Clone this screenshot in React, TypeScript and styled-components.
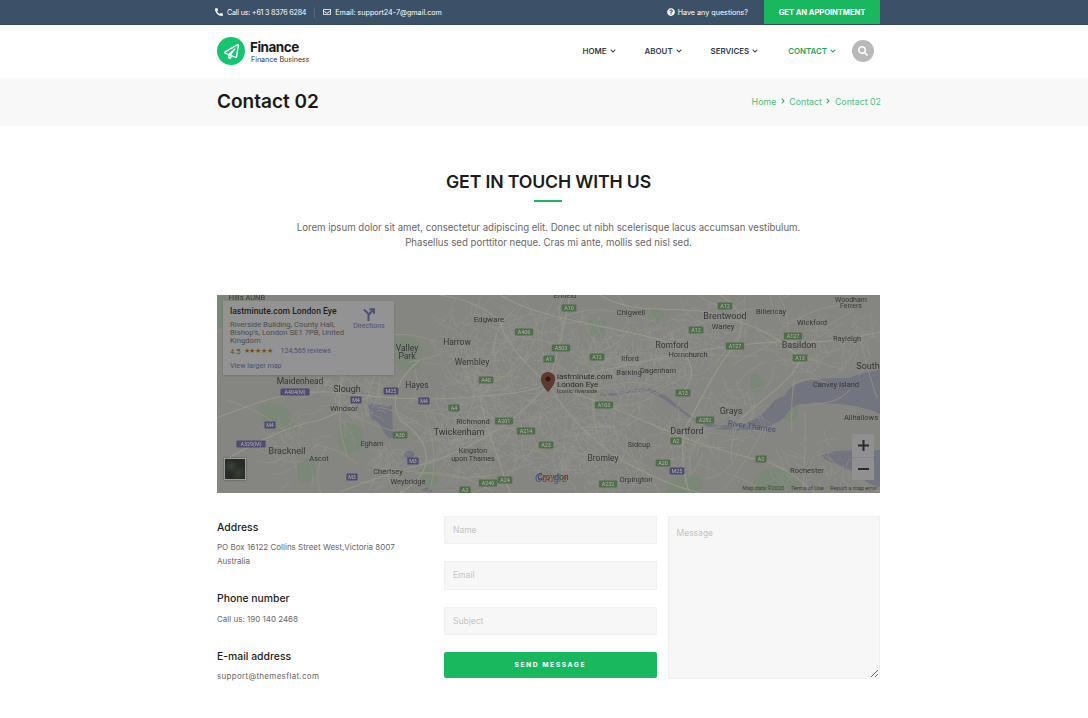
import React, { useMemo } from "react";
import styled, { createGlobalStyle } from "styled-components";
import { FaPhoneAlt, FaRegEnvelope, FaQuestionCircle, FaSearch, FaRegPaperPlane, FaChevronDown, FaChevronRight } from "react-icons/fa";

const Global = createGlobalStyle`
  html, body { margin: 0; padding: 0; background: #fff; overflow: hidden; }
  body { font-family: Inter, "Liberation Sans", sans-serif; color: #666; }
  * { box-sizing: border-box; }
`;
const Container = styled.div`
  width: 663px;
  margin-left: 217px;
  display: flex;
  align-items: center;
  justify-content: space-between;
`;
const TopBar = styled.div`
  height: 25px;
  background: #3c5068;
  border-bottom: 1px solid #33465c;
  color: #fff;
  font-size: 7.2px;
`;
const TopRow = styled(Container)`
  height: 24px;
`;
const TopGroup = styled.div`
  display: flex;
  align-items: center;
  height: 100%;
`;
const TopItem = styled.span<{ $gap?: number; $tight?: boolean; $shift?: number }>`
  display: inline-flex;
  align-items: center;
  gap: ${(p) => p.$gap ?? 4}px;
  margin-left: ${(p) => p.$shift ?? 0}px;
  letter-spacing: ${(p) => (p.$tight ? "-0.23px" : "0")};
  svg { font-size: 8px; }
`;
const TopDivider = styled.span`
  width: 1px;
  height: 11px;
  background: #52657c;
  margin: 0 8px;
`;
const Appointment = styled.a`
  display: flex;
  align-items: center;
  justify-content: center;
  width: 116px;
  height: 24px;
  margin-left: 16px;
  background: #19b85f;
  color: #fff;
  font-size: 7.7px;
  font-weight: 700;
  letter-spacing: -0.1px;
`;
const Header = styled(Container)`
  height: 53px;
  padding-bottom: 1px;
`;
const Logo = styled.div`
  display: flex;
  align-items: center;
  gap: 5px;
`;
const LogoMark = styled.div`
  width: 28px;
  height: 28px;
  border-radius: 50%;
  background: #17c46f;
  color: #fff;
  display: flex;
  align-items: center;
  justify-content: center;
  font-size: 15px;
`;
const LogoText = styled.div`
  display: flex;
  flex-direction: column;
  padding-top: 2px;
`;
const LogoName = styled.div`
  font-size: 13.5px;
  line-height: 14px;
  font-weight: 700;
  color: #1a1a1a;
  letter-spacing: -0.5px;
`;
const LogoSub = styled.div`
  font-size: 7.1px;
  line-height: 9px;
  color: #333;
  margin: 1px 0 0 1px;
`;
const Nav = styled.nav`
  display: flex;
  align-items: center;
`;
const NavItem = styled.a<{ $active?: boolean; $gap: number }>`
  display: inline-flex;
  align-items: center;
  gap: 3px;
  margin-right: ${(p) => p.$gap}px;
  font-size: 7.9px;
  font-weight: 600;
  color: ${(p) => (p.$active ? "#19a85a" : "#333c48")};
  svg { font-size: 6px; }
`;
const SearchButton = styled.button`
  width: 22px;
  height: 22px;
  margin-right: 6px;
  border: 0;
  padding: 0;
  border-radius: 50%;
  background: #b9b9b9;
  color: #fff;
  display: flex;
  align-items: center;
  justify-content: center;
  font-size: 10px;
`;
const TitleBand = styled.div`
  height: 48px;
  background: #f8f8f8;
`;
const TitleRow = styled(Container)`
  height: 48px;
  padding-bottom: 1px;
`;
const PageTitle = styled.h1`
  margin: 0;
  font-size: 19px;
  font-weight: 600;
  color: #1a1a1a;
`;
const Crumbs = styled.div`
  display: flex;
  align-items: center;
  gap: 3.5px;
  padding-bottom: 1px;
  margin-right: -1px;
  font-size: 8.8px;
  color: #4cbf7f;
  svg { font-size: 6px; color: #19a85a; }
`;
const Intro = styled.section`
  width: 663px;
  margin-left: 217px;
  padding-top: 46px;
  text-align: center;
`;
const SectionTitle = styled.h2`
  margin: 0;
  font-size: 17.7px;
  line-height: 20px;
  font-weight: 600;
  color: #1c1c1c;
  letter-spacing: -0.15px;
`;
const Underline = styled.div`
  width: 28px;
  height: 2px;
  margin: 8px auto 18px 317px;
  background: #19b85f;
`;
const IntroText = styled.p`
  margin: 0;
  font-size: 9.65px;
  line-height: 15px;
  color: #666;
`;
const MapWrap = styled.div`
  position: relative;
  width: 663px;
  height: 198px;
  margin: 45px 0 0 217px;
  background: #858581;
  overflow: hidden;
  font-family: Roboto, "Liberation Sans", sans-serif;
  svg.map { display: block; filter: blur(0.4px); }
`;
const InfoCard = styled.div`
  position: absolute;
  left: 6px;
  top: 6px;
  width: 171px;
  height: 74px;
  padding: 5px 7px;
  background: #939393;
  color: #4b4b4b;
  font-size: 7.7px;
  line-height: 8px;
  box-shadow: 0 1px 2px rgba(0, 0, 0, 0.15);
`;
const InfoName = styled.div`
  font-size: 8.6px;
  line-height: 11px;
  font-weight: 500;
  color: #1d1d1d;
  margin-bottom: 4px;
`;
const InfoAddress = styled.div`
  white-space: nowrap;
`;
const Rating = styled.div`
  display: flex;
  align-items: center;
  margin-top: 1px;
  font-size: 7.6px;
  line-height: 11px;
  color: #5a4a2a;
`;
const Stars = styled.span`
  font-size: 7px;
  letter-spacing: -0.2px;
  margin: 0 8px 0 3px;
  color: #6a4f1f;
`;
const Reviews = styled.span`
  color: #4c4f78;
  font-size: 7px;
`;
const LargerLink = styled.div`
  margin-top: 5px;
  font-size: 7.2px;
  color: #4c4f78;
`;
const Directions = styled.div`
  position: absolute;
  left: 129px;
  top: 7px;
  width: 34px;
  text-align: center;
  font-size: 7px;
  line-height: 9px;
  color: #4c4f78;
  svg { display: block; margin: 0 auto 1px; }
`;
const Thumb = styled.div`
  position: absolute;
  left: 7px;
  bottom: 13px;
  width: 22px;
  height: 22px;
  background:
    radial-gradient(circle at 30% 35%, #3c453a 0, transparent 35%),
    radial-gradient(circle at 70% 70%, #363d33 0, transparent 40%),
    #272b27;
  border: 1px solid #9a9a9a;
  box-shadow: 0 0 2px rgba(0, 0, 0, 0.4);
`;
const Zoom = styled.div`
  position: absolute;
  right: 6px;
  top: 139px;
  width: 22px;
  height: 46px;
  background: #909090;
  display: flex;
  flex-direction: column;
`;
const ZoomBtn = styled.div`
  flex: 1;
  display: flex;
  align-items: center;
  justify-content: center;
  & + & { border-top: 1px solid #858585; }
`;
const MapFoot = styled.div`
  position: absolute;
  right: 3px;
  bottom: 0;
  display: flex;
  gap: 6.5px;
  font-size: 5.6px;
  line-height: 9px;
  color: #3e3e3e;
  white-space: nowrap;
`;
const Contact = styled.section`
  width: 663px;
  margin: 23px 0 0 217px;
  display: grid;
  grid-template-columns: 227px 212.5px 212.5px;
  column-gap: 0;
`;
const InfoCol = styled.div`
  padding-top: 4.5px;
`;
const InfoBlock = styled.div<{ $mb: number }>`
  margin-bottom: ${(p) => p.$mb}px;
`;
const InfoHead = styled.h4`
  margin: 0 0 5.5px;
  font-size: 10.4px;
  line-height: 14px;
  font-weight: 500;
  color: #1c1c1c;
`;
const InfoLine = styled.p<{ $wide?: boolean }>`
  margin: 0;
  font-size: 8px;
  line-height: 14px;
  color: #666;
  letter-spacing: ${(p) => (p.$wide ? "0.3px" : "0")};
`;
const FormCol = styled.div`
  display: flex;
  flex-direction: column;
`;
const Field = styled.input`
  width: 100%;
  height: 28.33px;
  margin-bottom: 17px;
  padding: 0 8px;
  background: #f7f7f7;
  border: 1px solid #f1f1f1;
  font: 8.5px Inter, "Liberation Sans", sans-serif;
  outline: none;
  &::placeholder { color: #c4c4c4; }
`;
const Send = styled.button`
  height: 26px;
  border: 0;
  border-radius: 2px;
  background: #19b85f;
  color: #fff;
  font: 700 6.8px Inter, "Liberation Sans", sans-serif;
  letter-spacing: 1.5px;
`;
const Message = styled.textarea`
  display: block;
  width: 212.5px;
  height: 163px;
  margin-left: 11px;
  padding: 11px 8px;
  background: #f7f7f7;
  border: 1px solid #f1f1f1;
  font: 8.5px Inter, "Liberation Sans", sans-serif;
  outline: none;
  &::placeholder { color: #c4c4c4; }
`;

type L = [string, number, number, number?];
const labels: L[] = [
  ["Hills AUNB", 247, 298, 7.5], ["Enfield", 565, 296, 7.5], ["Edgware", 489, 320, 8], ["Harrow", 457, 343, 8.5], ["Wembley", 472, 363, 8.5],
  ["Valley", 407, 349, 8.5], ["Park", 407, 357, 8.5], ["Maidenhead", 300, 382, 8.5], ["Slough", 347, 390, 9], ["Hayes", 417, 386, 8.5],
  ["Windsor", 344, 409, 7.5], ["Egham", 372, 444, 7.5], ["Twickenham", 459, 433, 9], ["Richmond", 473, 422, 7.5], ["Kingston", 473, 451.5, 7.2],
  ["upon Thames", 473, 459, 7.2], ["Bracknell", 287, 452, 9], ["Ascot", 319, 459, 7.5], ["Chertsey", 388, 472, 7.5], ["Weybridge", 408, 482, 7.5],
  ["Chigwell", 631, 313, 7.5], ["Brentwood", 725, 317, 9], ["Warley", 723, 327, 7.5], ["Billericay", 771, 312, 7.5], ["Wickford", 812, 323, 7.5],
  ["Woodham", 851, 300, 7], ["Ferrers", 851, 306.5, 7], ["Romford", 672, 346, 8.5], ["Hornchurch", 688, 355, 7.5], ["Basildon", 799, 346, 9],
  ["Rayleigh", 847, 339, 7.5], ["Ilford", 630, 359, 7.5], ["Barking", 629, 373, 7.5], ["Dagenham", 658, 371, 7.5], ["South", 868, 367, 9],
  ["Canvey Island", 836, 385, 7.5], ["Grays", 731, 412, 9], ["Allhallows", 861, 418, 7.5], ["Dartford", 687, 432, 9], ["Sidcup", 639, 445, 7.5],
  ["Bromley", 603, 459, 8.5], ["Orpington", 636, 480, 7.5], ["Rochester", 807, 471, 7.5], ["Croydon", 553, 478, 8.5],
];
type B = [string, number, number, boolean?];
const badges: B[] = [
  ["A10", 569, 308], ["A12", 725, 306], ["A12", 696, 330], ["A127", 793, 336], ["A127", 735, 346], ["A13", 800, 358], ["A503", 561, 348],
  ["A1", 549, 359], ["A12", 597, 357], ["A13", 683, 393], ["A103", 604, 405], ["A282", 705, 420], ["A2", 676, 441], ["A20", 663, 463],
  ["M25", 677, 471, true], ["A232", 608, 484], ["A2", 761, 459], ["A23", 546, 445], ["A406", 524, 332], ["A40", 486, 380], ["A4", 454, 408],
  ["A201", 504, 421], ["A214", 526, 431], ["A30", 400, 435], ["M4", 356, 400, true], ["M25", 391, 391, true], ["M4", 424, 401, true],
  ["A404(M)", 295, 392, true], ["M4", 270, 425, true], ["A329(M)", 251, 444, true], ["M3", 413, 461, true], ["M3", 352, 477, true],
  ["A240", 488, 483], ["A24", 505, 480], ["A3", 465, 490],
];
const majorRoads = [
  "M217 418 C250 405 285 390 330 392 C380 398 430 402 480 396 C510 394 530 392 548 384",
  "M548 384 C590 372 640 362 690 352 C730 346 770 340 810 342 C840 342 860 336 880 332",
  "M225 460 C260 440 290 425 320 420 C345 410 360 400 372 395",
  "M548 384 C520 420 470 450 430 462 C400 470 370 480 340 492",
  "M548 384 C570 420 600 450 640 470 C660 480 680 488 700 493",
  "M548 384 C560 350 565 320 570 295",
  "M548 384 C520 360 505 340 500 322 C490 310 470 300 440 295",
  "M400 493 C440 470 430 440 400 420 C390 400 395 380 420 360",
  "M690 493 C680 470 680 430 690 420 C700 400 720 360 735 346 C745 330 745 310 720 295",
  "M600 295 C640 320 690 300 735 320 C780 335 790 350 800 358 C800 375 760 400 740 420",
  "M548 384 C600 400 650 425 690 440 C720 450 745 458 762 460 C790 470 800 480 815 493",
  "M500 295 C540 320 610 325 660 340 C690 350 700 370 683 393",
  "M480 396 C485 430 500 460 505 480 C508 488 510 490 510 493",
];
const greens = [
  "M217 295 L262 295 L258 312 L225 330 L217 325 Z", "M260 405 C280 400 300 412 292 430 C275 440 258 425 260 405 Z",
  "M340 425 C360 418 372 432 360 450 C345 458 330 445 340 425 Z", "M395 340 C415 330 430 345 418 368 C400 376 388 360 395 340 Z",
  "M752 493 C750 475 765 465 785 470 C800 478 805 485 800 493 Z", "M665 493 C670 480 685 470 700 478 C705 485 700 490 698 493 Z",
  "M785 405 C795 400 802 408 795 420 C785 424 780 415 785 405 Z", "M650 310 C660 305 668 312 660 325 C652 328 645 320 650 310 Z",
  "M420 470 C432 464 442 472 436 486 C426 490 416 482 420 470 Z", "M590 320 C605 314 612 328 600 336 C590 340 584 330 590 320 Z",
  "M300 460 C315 455 322 470 310 482 C298 486 292 472 300 460 Z", "M750 375 C762 372 770 382 760 392 C750 395 744 385 750 375 Z",
];
const water = [
  "M600 394 C620 394 640 386 650 389 C670 393 680 412 700 421 C720 428 745 427 760 416 C772 407 772 398 785 396 C790 380 815 378 850 378 C862 372 870 372 880 370 L880 414 C860 404 830 402 800 404 C785 408 790 418 775 423 C760 432 730 433 705 426 C685 418 670 400 650 392 C630 390 620 397 600 396 Z",
  "M822 455 C840 448 860 452 880 450 L880 487 C865 485 860 472 845 468 C835 462 825 462 822 455 Z",
  "M368 405 C378 402 385 410 392 405 L393 438 C382 440 384 420 372 420 Z",
  "M420 490 C428 486 434 488 432 492 Z", "M405 452 C412 448 418 454 412 458 C406 460 402 456 405 452 Z",
];

function mulberry(seed: number) {
  let a = seed;
  return () => {
    a = (a + 0x6d2b79f5) | 0;
    let t = Math.imul(a ^ (a >>> 15), 1 | a);
    t = (t + Math.imul(t ^ (t >>> 7), 61 | t)) ^ t;
    return ((t ^ (t >>> 14)) >>> 0) / 4294967296;
  };
}

function Streets() {
  const [minor, secondary] = useMemo(() => {
    const r = mulberry(11);
    const hubs: [number, number, number, number][] = [
      [548, 395, 95, 620], [460, 410, 50, 130], [640, 360, 45, 130], [680, 350, 40, 90], [350, 395, 35, 70], [730, 415, 35, 60],
      [800, 345, 35, 70], [725, 320, 25, 40], [600, 460, 50, 130], [470, 450, 35, 70], [810, 475, 40, 50], [290, 445, 30, 40], [860, 345, 25, 40],
      [480, 340, 45, 110], [690, 440, 30, 60], [390, 470, 30, 50],
    ];
    let out = "";
    hubs.forEach(([cx, cy, rad, n]) => {
      for (let i = 0; i < n; i++) {
        const a = r() * Math.PI * 2;
        const q = Math.sqrt(r()) * rad;
        const x = cx + Math.cos(a) * q;
        const y = cy + Math.sin(a) * q * 0.85;
        const b = r() * Math.PI * 2;
        const len = 5 + r() * 14;
        const x2 = x + Math.cos(b) * len;
        const y2 = y + Math.sin(b) * len;
        const x3 = x2 + Math.cos(b + 0.8) * len * 0.6;
        const y3 = y2 + Math.sin(b + 0.8) * len * 0.6;
        out += `M${x.toFixed(1)} ${y.toFixed(1)}Q${x2.toFixed(1)} ${y2.toFixed(1)} ${x3.toFixed(1)} ${y3.toFixed(1)}`;
      }
    });
    let sec = "";
    for (let i = 0; i < 90; i++) {
      const x = 217 + r() * 663;
      const y = 295 + r() * 198;
      const b = r() * Math.PI * 2;
      const len = 18 + r() * 35;
      const c = b + (r() - 0.5) * 1.2;
      sec += `M${x.toFixed(1)} ${y.toFixed(1)}Q${(x + Math.cos(b) * len).toFixed(1)} ${(y + Math.sin(b) * len).toFixed(1)} ${(x + Math.cos(c) * len * 1.7).toFixed(1)} ${(y + Math.sin(c) * len * 1.7).toFixed(1)}`;
    }
    return [out, sec];
  }, []);
  return (
    <>
      <path d={minor} fill="none" stroke="#93938f" strokeWidth="0.55" />
      <path d={secondary} fill="none" stroke="#959584" strokeWidth="0.8" />
    </>
  );
}

function MapArt() {
  return (
    <svg className="map" width="663" height="198" viewBox="217 295 663 198" fontFamily="Roboto, 'Liberation Sans', sans-serif">
      <defs>
        <linearGradient id="googleFill" x1="0" x2="1" y1="0" y2="0">
          <stop offset="0.22" stopColor="#4d5f86" />
          <stop offset="0.22" stopColor="#86483c" />
          <stop offset="0.42" stopColor="#86483c" />
          <stop offset="0.42" stopColor="#857538" />
          <stop offset="0.6" stopColor="#857538" />
          <stop offset="0.6" stopColor="#4d5f86" />
          <stop offset="0.78" stopColor="#4d5f86" />
          <stop offset="0.78" stopColor="#4c7252" />
          <stop offset="0.85" stopColor="#4c7252" />
          <stop offset="0.85" stopColor="#86483c" />
        </linearGradient>
      </defs>
      <rect x="217" y="295" width="663" height="198" fill="#858581" />
      {greens.map((g, i) => <path key={i} d={g} fill="#7b8777" />)}
      {water.map((g, i) => <path key={i} d={g} fill="#72747f" />)}
      <Streets />
      {majorRoads.map((g, i) => <path key={i} d={g} fill="none" stroke="#98988a" strokeWidth="1.1" />)}
      {labels.map(([t, x, y, s], i) => (
        <text key={i} x={x} y={y} fontSize={s} textAnchor="middle" dominantBaseline="middle" fill="#363636">{t}</text>
      ))}
      <text x="752" y="429" fontSize="8" textAnchor="middle" fill="#4b4e70" transform="rotate(8 752 426)">River Thames</text>
      <text x="535" y="482" fontSize="10" fontWeight="500" fill="url(#googleFill)">Google</text>
      {badges.map(([t, x, y, m], i) => {
        const w = t.length * 3.6 + 4;
        return (
          <g key={i}>
            <rect x={x - w / 2} y={y - 3.5} width={w} height={7} rx="1" fill={m ? "#4f4a74" : "#4f6f4a"} />
            <text x={x} y={y + 0.2} fontSize="5.4" textAnchor="middle" dominantBaseline="middle" fill="#b4b4af">{t}</text>
          </g>
        );
      })}
      <path d="M548 372c-4 0-7.2 3.2-7.2 7.2 0 5.4 7.2 12.8 7.2 12.8s7.2-7.4 7.2-12.8c0-4-3.2-7.2-7.2-7.2z" fill="#5f3a2c" />
      <circle cx="548" cy="379" r="2.5" fill="#2f1a14" />
      <text x="557" y="379" fontSize="8" fill="#2e2a26">lastminute.com</text>
      <text x="557" y="387" fontSize="8" fill="#2e2a26">London Eye</text>
      <text x="557" y="393" fontSize="6" fill="#3a3a30">Iconic riverside</text>
    </svg>
  );
}

export default function App() {
  return (
    <>
      <Global />
      <TopBar>
        <TopRow>
          <TopGroup>
            <TopItem $tight $shift={-2}><FaPhoneAlt />Call us: +61 3 8376 6284</TopItem>
            <TopDivider />
            <TopItem><FaRegEnvelope />Email: support24-7@gmail.com</TopItem>
          </TopGroup>
          <TopGroup>
            <TopItem $gap={3}><FaQuestionCircle />Have any questions?</TopItem>
            <Appointment>GET AN APPOINTMENT</Appointment>
          </TopGroup>
        </TopRow>
      </TopBar>
      <Header>
        <Logo>
          <LogoMark><FaRegPaperPlane /></LogoMark>
          <LogoText>
            <LogoName>Finance</LogoName>
            <LogoSub>Finance Business</LogoSub>
          </LogoText>
        </Logo>
        <Nav>
          <NavItem $gap={29}>HOME <FaChevronDown /></NavItem>
          <NavItem $gap={29}>ABOUT <FaChevronDown /></NavItem>
          <NavItem $gap={30}>SERVICES <FaChevronDown /></NavItem>
          <NavItem $active $gap={16}>CONTACT <FaChevronDown /></NavItem>
          <SearchButton aria-label="Search"><FaSearch /></SearchButton>
        </Nav>
      </Header>
      <TitleBand>
        <TitleRow>
          <PageTitle>Contact 02</PageTitle>
          <Crumbs>Home <FaChevronRight /> Contact <FaChevronRight /> Contact 02</Crumbs>
        </TitleRow>
      </TitleBand>
      <Intro>
        <SectionTitle>GET IN TOUCH WITH US</SectionTitle>
        <Underline />
        <IntroText>Lorem ipsum dolor sit amet, consectetur adipiscing elit. Donec ut nibh scelerisque lacus accumsan vestibulum.</IntroText>
        <IntroText>Phasellus sed porttitor neque. Cras mi ante, mollis sed nisl sed.</IntroText>
      </Intro>
      <MapWrap>
        <MapArt />
        <InfoCard>
          <InfoName>lastminute.com London Eye</InfoName>
          <InfoAddress>Riverside Building, County Hall,<br />Bishop's, London SE1 7PB, United<br />Kingdom</InfoAddress>
          <Rating>4.5<Stars>★★★★★</Stars><Reviews>124,565 reviews</Reviews></Rating>
          <LargerLink>View larger map</LargerLink>
          <Directions>
            <svg width="12" height="13" viewBox="0 0 12 13"><path d="M1 1.5L5.5 6V13M5.5 7L10 2M6.5 1.2H11V5.7" fill="none" stroke="#4c4f78" strokeWidth="2" /></svg>
            Directions
          </Directions>
        </InfoCard>
        <Thumb />
        <Zoom>
          <ZoomBtn><svg width="11" height="11" viewBox="0 0 11 11"><path d="M5.5 0v11M0 5.5h11" stroke="#2b2b2b" strokeWidth="2" /></svg></ZoomBtn>
          <ZoomBtn><svg width="11" height="2" viewBox="0 0 11 2"><path d="M0 1h11" stroke="#2b2b2b" strokeWidth="2" /></svg></ZoomBtn>
        </Zoom>
        <MapFoot><span>Map data ©2020</span><span>Terms of Use</span><span>Report a map error</span></MapFoot>
      </MapWrap>
      <Contact>
        <InfoCol>
          <InfoBlock $mb={24}>
            <InfoHead>Address</InfoHead>
            <InfoLine>PO Box 16122 Collins Street West,Victoria 8007</InfoLine>
            <InfoLine>Australia</InfoLine>
          </InfoBlock>
          <InfoBlock $mb={24}>
            <InfoHead>Phone number</InfoHead>
            <InfoLine>Call us: 190 140 2468</InfoLine>
          </InfoBlock>
          <InfoBlock $mb={0}>
            <InfoHead>E-mail address</InfoHead>
            <InfoLine $wide>support@themesflat.com</InfoLine>
          </InfoBlock>
        </InfoCol>
        <FormCol>
          <Field placeholder="Name" />
          <Field placeholder="Email" />
          <Field placeholder="Subject" />
          <Send>SEND MESSAGE</Send>
        </FormCol>
        <Message placeholder="Message" />
      </Contact>
    </>
  );
}
